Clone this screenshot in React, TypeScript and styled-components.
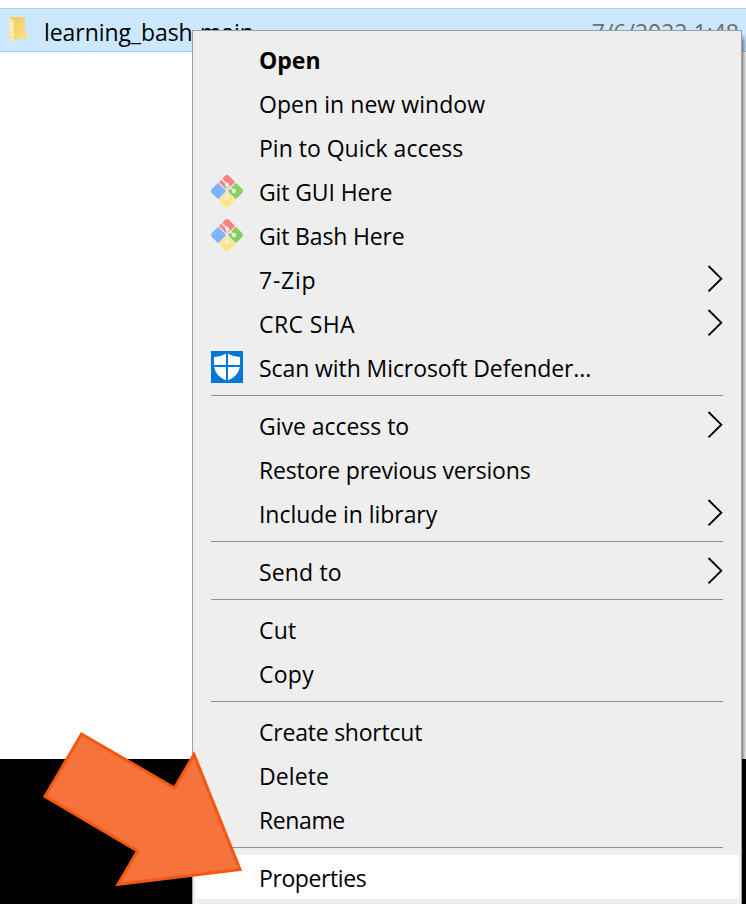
import React from 'react';
import styled, { createGlobalStyle } from 'styled-components';

const GlobalStyle = createGlobalStyle`
  * { box-sizing: border-box; }
  html, body { margin: 0; overflow: hidden; background: #fff; }
  body { font-family: "Open Sans", "Noto Sans", sans-serif; color: #000; }
`;

const Desktop = styled.main`
  position: relative;
  width: 746px;
  height: 904px;
  overflow: hidden;
  padding-top: 8px;
  background: linear-gradient(#fff 759px, #000 759px);
`;

const FileRow = styled.div`
  display: flex;
  align-items: center;
  height: 44px;
  padding: 0 7px 0 9px;
  background: #cce8ff;
  border: solid #99d1ff;
  border-width: 1px 0;
  font-size: 23px;
  line-height: 32px;
  white-space: nowrap;
`;

const FileName = styled.span`
  margin-left: 16px;
  padding-top: 4px;
  flex: 1;
  letter-spacing: -0.06px;
`;

const FileDate = styled.span`
  padding-top: 4px;
  color: #6d6d6d;
`;

const Menu = styled.nav`
  position: absolute;
  left: 192px;
  top: 30px;
  width: 550px;
  height: 900px;
  padding: 6px 2px;
  background: #eee;
  border: 1px solid #a0a0a0;
`;

const MenuShadow = styled.div`
  position: absolute;
  left: 742px;
  top: 34px;
  width: 4px;
  height: 725px;
  background: linear-gradient(90deg, rgba(0, 0, 0, 0.46), rgba(0, 0, 0, 0.08));
  mask-image: linear-gradient(transparent, #000 8px);
`;

const Item = styled.div<{ $active?: boolean; $bold?: boolean; $spacing: number }>`
  display: grid;
  grid-template-columns: 48px 1fr 16px;
  grid-template-rows: 44px;
  align-items: center;
  height: 44px;
  padding: 0 16px;
  background: ${p => (p.$active ? '#fff' : 'transparent')};
  font-size: 23px;
  line-height: 42px;
  font-weight: ${p => (p.$bold ? 700 : 400)};
  letter-spacing: ${p => p.$spacing}px;
  white-space: nowrap;
`;

const Label = styled.span`
  padding-top: 2px;
`;

const Divider = styled.div`
  height: 14px;
  padding: 6px 16px 7px;
  &::before {
    content: '';
    display: block;
    height: 1px;
    background: #919191;
  }
`;

const Icon = styled.svg`
  display: block;
  flex: none;
`;

const ArrowOverlay = styled.svg`
  position: absolute;
  left: 0;
  top: 720px;
`;

const FolderIcon = () => (
  <Icon width="19" height="30" viewBox="0 0 19 30">
    <defs>
      <linearGradient id="folderBack" x1="0" y1="0" x2="1" y2="1">
        <stop offset="0" stopColor="#efca62" />
        <stop offset="1" stopColor="#fbe08a" />
      </linearGradient>
    </defs>
    <path d="M1 2H16V15L18 17V24H4Z" fill="url(#folderBack)" />
    <path d="M0 2L5 6V27L4 28L0 25Z" fill="#ffe9a8" />
  </Icon>
);

const GitIcon = () => (
  <Icon width="32" height="32" viewBox="0 0 32 32">
    <path d="M14 .8Q16 -.8 18 .8L24 7L16 15.200L8 7Z" fill="#ff8080" />
    <path d="M24.800 7.800L31.200 14Q32.800 16 31.200 18L24.800 24.200L16.800 16Z" fill="#85cf60" />
    <path d="M7.200 7.800L15.200 16L7.200 24.200L.8 18Q-.8 16 .8 14Z" fill="#80b3ff" />
    <path d="M16 16.800L24 25L18 31.200Q16 32.800 14 31.200L8 25Z" fill="#ffe680" />
    <path d="M10.500 4L16 9.500V23M16 9.500L23 16" fill="none" stroke="#eee" strokeWidth="1.600" />
    <circle cx="16" cy="9.500" r="2" fill="#eee" />
    <circle cx="23" cy="16" r="2.200" fill="#eee" />
    <circle cx="16" cy="23" r="2.300" fill="#eee" />
  </Icon>
);

const DefenderIcon = () => (
  <Icon width="32" height="32" viewBox="0 0 32 32">
    <path d="M0 0H32V32H0Z" fill="#0078d7" />
    <path d="M16 2Q21 5.500 29 6V15Q28 25 16 30Q4 25 3 15V6Q11 5.500 16 2Z" fill="#fff" />
    <path d="M16 1V31M2 15H30" stroke="#0078d7" strokeWidth="2" />
  </Icon>
);

const Chevron = () => (
  <Icon width="16" height="28" viewBox="0 0 16 28">
    <path d="M1.500 1L14.300 13.700L1.500 26.400" fill="none" stroke="#000" strokeWidth="1.900" />
  </Icon>
);

type Entry = {
  label: string;
  icon?: 'git' | 'defender';
  submenu?: boolean;
  bold?: boolean;
  active?: boolean;
  spacing?: number;
};

const groups: Entry[][] = [
  [
    { label: 'Open', bold: true },
    { label: 'Open in new window', spacing: 0.05 },
    { label: 'Pin to Quick access' },
    { label: 'Git GUI Here', icon: 'git', spacing: -0.12 },
    { label: 'Git Bash Here', icon: 'git', spacing: -0.16 },
    { label: '7-Zip', submenu: true, spacing: 0.75 },
    { label: 'CRC SHA', submenu: true, spacing: 0.4 },
    { label: 'Scan with Microsoft Defender...', icon: 'defender', spacing: -0.08 },
  ],
  [
    { label: 'Give access to', submenu: true, spacing: -0.03 },
    { label: 'Restore previous versions', spacing: -0.2 },
    { label: 'Include in library', submenu: true, spacing: -0.05 },
  ],
  [{ label: 'Send to', submenu: true, spacing: 0.15 }],
  [{ label: 'Cut', spacing: 0.15 }, { label: 'Copy', spacing: 0.25 }],
  [
    { label: 'Create shortcut', spacing: -0.22 },
    { label: 'Delete', spacing: 0.1 },
    { label: 'Rename', spacing: -0.4 },
  ],
  [{ label: 'Properties', active: true, spacing: -0.4 }],
];

export default function App() {
  return (
    <>
      <GlobalStyle />
      <Desktop>
        <FileRow>
          <FolderIcon />
          <FileName>learning_bash-main</FileName>
          <FileDate>7/6/2022 1:48</FileDate>
        </FileRow>
        <MenuShadow />
        <Menu>
          {groups.map((group, i) => (
            <React.Fragment key={i}>
              {i > 0 && <Divider />}
              {group.map(e => (
                <Item key={e.label} $active={e.active} $bold={e.bold} $spacing={e.spacing ?? 0}>
                  <span>
                    {e.icon === 'git' && <GitIcon />}
                    {e.icon === 'defender' && <DefenderIcon />}
                  </span>
                  <Label>{e.label}</Label>
                  {e.submenu && <Chevron />}
                </Item>
              ))}
            </React.Fragment>
          ))}
        </Menu>
        <ArrowOverlay width="250" height="184" viewBox="0 720 250 184">
          <path
            d="M81.500 734L174.500 788L194 754.500L240 869.500L118 884.500L137.500 851L45 796.500Z"
            fill="#f6733b"
            stroke="#f45810"
            strokeWidth="3"
          />
        </ArrowOverlay>
      </Desktop>
    </>
  );
}
